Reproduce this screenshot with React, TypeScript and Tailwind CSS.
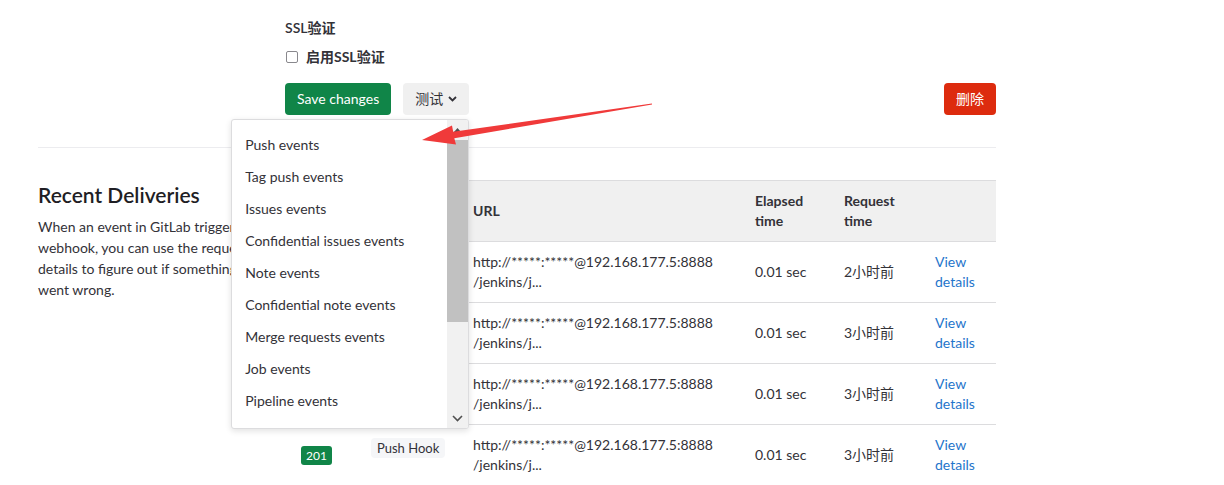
import React from "react";

const rows = [
  { time: "2小时前" },
  { time: "3小时前" },
  { time: "3小时前" },
  { time: "3小时前" },
];

const items = [
  "Push events",
  "Tag push events",
  "Issues events",
  "Confidential issues events",
  "Note events",
  "Confidential note events",
  "Merge requests events",
  "Job events",
  "Pipeline events",
  "Wiki page events",
];

const cols = "grid grid-cols-[73px_102px_282px_89px_91px_74px]";

function Dropdown() {
  return (
    <div className="absolute right-0 top-[36px] z-20 h-[310px] w-[238px] overflow-hidden rounded-[3px] border border-[#dcdcde] bg-white shadow-[0_2px_6px_rgba(0,0,0,0.12)]">
      <div className="pt-[9px]">
        {items.map((it) => (
          <div key={it} className="flex h-[32px] items-center pl-[13px] text-[14px] text-[#333238]">
            {it}
          </div>
        ))}
      </div>
      <div className="absolute right-0 top-0 flex h-full w-[21px] flex-col bg-[#f1f1f1]">
        <div className="flex h-[20px] items-center justify-center">
          <svg width="9" height="6" viewBox="0 0 9 6"><path d="M0.5 5.5 L4.5 1 L8.5 5.5 Z" fill="#505050" /></svg>
        </div>
        <div className="h-[182px] bg-[#c1c1c1]" />
        <div className="flex-1" />
        <div className="flex h-[20px] items-center justify-center">
          <svg width="11" height="7" viewBox="0 0 11 7"><path d="M1 1 L5.5 5.5 L10 1" fill="none" stroke="#505050" strokeWidth="1.6" /></svg>
        </div>
      </div>
    </div>
  );
}

export default function App() {
  return (
    <div className="relative h-[485px] w-[1224px] overflow-hidden bg-white font-['Lato','Noto_Sans_CJK_SC',sans-serif] text-[14px] leading-[20px] text-[#333238]">
      <div className="ml-[38px] w-[958px]">
        <div className="ml-[247px] pt-[18px]">
          <div className="font-semibold">SSL验证</div>
          <label className="mt-[9px] flex items-center gap-[8px]">
            <span className="ml-[1px] inline-block h-[12px] w-[12px] rounded-[2px] border-[1.5px] border-[#89888d] bg-white" />
            <span className="font-bold">启用SSL验证</span>
          </label>
          <div className="mt-[16px] flex items-center justify-between">
            <div className="flex items-center gap-[12px]">
              <button className="h-[32px] rounded-[4px] bg-[#108548] px-[12px] text-[14px] text-white">Save changes</button>
              <div className="relative">
                <button className="flex h-[32px] items-center gap-[5px] rounded-[4px] bg-[#f0f0f0] px-[12px] text-[14px] text-[#333238]">
                  测试
                  <svg width="9" height="6" viewBox="0 0 9 6"><path d="M1 1 L4.5 4.5 L8 1" fill="none" stroke="#333238" strokeWidth="1.8" /></svg>
                </button>
                <Dropdown />
              </div>
            </div>
            <button className="h-[32px] rounded-[4px] bg-[#dd2b0e] px-[12px] text-[14px] text-white">删除</button>
          </div>
        </div>
        <div className="mt-[32px] border-t border-[#ececef]" />
        <div className="flex">
          <div className="w-[247px] pr-[16px] pt-[35px]">
            <h4 className="text-[21px] font-semibold leading-[24px] text-[#1f1e24]">Recent Deliveries</h4>
            <p className="mt-[9px] leading-[21px]">
              When an event in GitLab triggers a webhook, you can use the request details to figure out if something went wrong.
            </p>
          </div>
          <div className="mt-[32px] w-[711px] border-t border-[#dcdcde]">
            <div className={`${cols} h-[61px] items-center border-b border-[#dcdcde] bg-[#f0f0f0] font-bold`}>
              <div className="px-[13px]">Status</div>
              <div className="px-[13px]">Trigger</div>
              <div className="px-[13px]">URL</div>
              <div className="px-[13px]">Elapsed<br />time</div>
              <div className="px-[13px]">Request<br />time</div>
              <div />
            </div>
            {rows.map((r, i) => (
              <div key={i} className={`${cols} h-[61px] items-center border-b border-[#dcdcde]`}>
                <div className="pl-[16px]">
                  <span className="inline-flex h-[19px] items-center rounded-[3px] bg-[#108548] px-[5px] text-[12px] text-white">201</span>
                </div>
                <div className="mt-[13px] self-start pl-[13px]">
                  <span className="inline-flex h-[20px] items-center rounded-[4px] bg-[#f5f6f8] px-[6px] text-[13px] text-[#333238]">Push Hook</span>
                </div>
                <div className="px-[13px]">
                  http://*****:*****@192.168.177.5:8888<br />/jenkins/j...
                </div>
                <div className="px-[13px]">0.01 sec</div>
                <div className="px-[13px]">{r.time}</div>
                <div className="px-[13px] text-[#1f75cb]">View<br />details</div>
              </div>
            ))}
          </div>
        </div>
      </div>
      <svg className="pointer-events-none absolute left-0 top-0 z-30" width="1224" height="485">
        <polygon
          points="422,140 456,144.5 454.3,138.2 652.1,104.6 651.9,103.4 453.2,131.8 452,125.5"
          fill="#f03a3a"
        />
      </svg>
    </div>
  );
}
